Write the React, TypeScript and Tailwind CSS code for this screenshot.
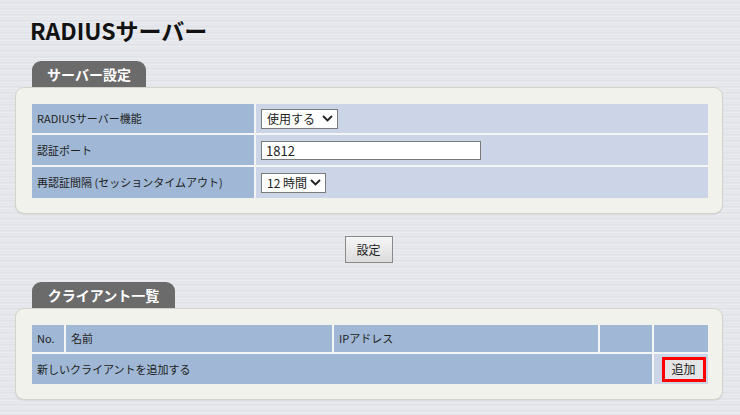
import React from "react"

const font = { fontFamily: '"Noto Sans CJK JP", "Noto Sans", sans-serif' }

function Chevron() {
  return (
    <svg width="11" height="7" viewBox="0 0 11 7" className="shrink-0">
      <polyline points="1,1 5.5,5.5 10,1" fill="none" stroke="#222" strokeWidth="1.9" />
    </svg>
  )
}

function Select({ value, width }: { value: string; width: string }) {
  return (
    <div
      className={`flex h-[20px] items-center justify-between border border-[#7a7a7a] bg-white pl-[5px] pr-[4px] text-[12px] text-[#222] ${width}`}
    >
      <span className="leading-none">{value}</span>
      <Chevron />
    </div>
  )
}

function Tab({ label, width }: { label: string; width: string }) {
  return (
    <div
      className={`ml-[17px] flex h-[26px] items-center justify-center rounded-t-[9px] bg-[#6b6b6b] text-[14px] font-bold text-white ${width}`}
    >
      {label}
    </div>
  )
}

function Panel({ children }: { children: React.ReactNode }) {
  return (
    <div className="rounded-[9px] border border-[#d4d4cc] bg-[#f2f2ec] pb-[15px] pl-[16px] pr-[14px] pt-[16px] shadow-[0_1px_1px_rgba(0,0,0,0.08)]">
      {children}
    </div>
  )
}

const label = "flex items-center bg-[#a0b8d6] pl-[5px] text-[11px] text-[#222]"
const value = "flex items-center bg-[#ccd5e7] pl-[5px]"

export default function App() {
  return (
    <div
      style={font}
      className="h-[415px] w-full overflow-hidden bg-[repeating-linear-gradient(180deg,#e6e8ed_0px,#e6e8ed_2px,#d9dce2_3px,#eceef2_4px,#e1e4e9_6px)] pl-[15px] pr-[17px]"
    >
      {/* Title */}
      <h1 className="pl-[15px] pt-[15px] text-[23px] font-bold leading-[30px] text-[#111]">
        RADIUSサーバー
      </h1>

      {/* Server settings */}
      <div className="mt-[16px]">
        <Tab label="サーバー設定" width="w-[114px]" />
        <Panel>
          <div className="grid grid-cols-[222px_1fr] gap-[2px] bg-[#f4f5f4]">
            <div className={`${label} h-[29px]`}>RADIUSサーバー機能</div>
            <div className={value}>
              <Select value="使用する" width="w-[77px]" />
            </div>
            <div className={`${label} h-[30px]`}>認証ポート</div>
            <div className={value}>
              <div className="flex h-[19px] w-[220px] items-center border border-[#7a7a7a] bg-white pl-[4px] text-[13px] leading-none text-[#222]">
                1812
              </div>
            </div>
            <div className={`${label} h-[31px]`}>再認証間隔 (セッションタイムアウト)</div>
            <div className={value}>
              <Select value="12 時間" width="w-[65px]" />
            </div>
          </div>
        </Panel>
      </div>

      {/* Apply button */}
      <div className="mt-[22px] flex justify-center pr-[1px]">
        <button className="h-[27px] w-[48px] border border-[#8a8a8a] bg-[linear-gradient(180deg,#f6f6f6,#dcdcdc)] text-[12px] text-[#222]">
          設定
        </button>
      </div>

      {/* Client list */}
      <div className="mt-[19px]">
        <Tab label="クライアント一覧" width="w-[143px]" />
        <Panel>
          <div className="grid grid-cols-[32px_266px_264px_52px_1fr] gap-[2px] bg-[#f4f5f4]">
            <div className={`${label} h-[27px]`}>No.</div>
            <div className={label}>名前</div>
            <div className={label}>IPアドレス</div>
            <div className={label}></div>
            <div className={label}></div>
            <div className={`${label} col-span-4 h-[30px]`}>新しいクライアントを追加する</div>
            <div className={`${value} justify-center pl-0`}>
              <div className="border-[3px] border-[#ff0000]">
                <button className="flex h-[19px] w-[38px] items-center justify-center bg-[#e4e4e4] text-[12px] text-[#222]">
                  追加
                </button>
              </div>
            </div>
          </div>
        </Panel>
      </div>
    </div>
  )
}
